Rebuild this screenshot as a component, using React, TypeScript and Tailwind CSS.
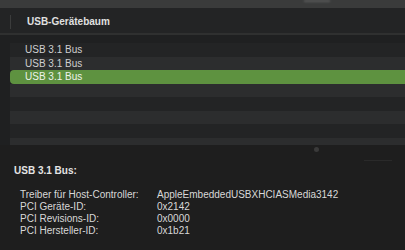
const rows = [
  { label: "USB 3.1 Bus", state: "dark" },
  { label: "USB 3.1 Bus", state: "light" },
  { label: "USB 3.1 Bus", state: "selected" },
  { label: "", state: "light" },
  { label: "", state: "dark" },
  { label: "", state: "light" },
  { label: "", state: "dark" },
];

const details = [
  ["Treiber für Host-Controller:", "AppleEmbeddedUSBXHCIASMedia3142"],
  ["PCI Geräte-ID:", "0x2142"],
  ["PCI Revisions-ID:", "0x0000"],
  ["PCI Hersteller-ID:", "0x1b21"],
];

export default function App() {
  return (
    <div className="w-[405px] h-[250px] overflow-hidden bg-[#1e1e1e] flex flex-col font-['Liberation_Sans',Arial,sans-serif] text-[10px] leading-none">
      {/* window top strip, the cut-off column title shows as a faint smudge */}
      <div className="h-[8px] shrink-0 bg-[#3a3b3b] relative overflow-hidden">
        <div className="absolute left-[304px] top-0 w-[26px] h-[2px] bg-[#5a5b5b] blur-[1px]" />
      </div>

      {/* column header */}
      <div className="h-[25px] shrink-0 bg-[#232425] flex items-center pt-[3px]">
        <div className="ml-[10px] w-px h-[14px] bg-[#3b3c3c]" />
        <span className="ml-[16px] font-bold text-[#e0e0e0]">USB-Gerätebaum</span>
      </div>
      <div className="h-[2px] shrink-0 bg-[#2f3030]" />

      {/* tree */}
      <div className="h-[110px] shrink-0 bg-[#1f2021] pl-[10px] pt-[8px] overflow-hidden">
        {rows.map((r, i) => (
          <div
            key={i}
            className={
              r.state === "selected"
                ? "h-[13.5px] flex items-center pl-[15px] pt-[1px] bg-[#5e9240] rounded-l-[4px] text-[#eef3ea]"
                : r.state === "light"
                ? "h-[13.5px] flex items-center pl-[15px] pt-[1px] bg-[#2c2d2e] text-[#cfcfcf]"
                : "h-[13.5px] flex items-center pl-[15px] pt-[1px] bg-[#232425] text-[#cfcfcf]"
            }
          >
            {r.label}
          </div>
        ))}
        <div className="h-[8px] bg-[#2c2d2e]" />
      </div>

      {/* details */}
      <div className="flex-1 relative px-[14px] pt-[21px]">
        <div className="absolute left-[314px] top-[2px] w-[5px] h-[5px] rounded-full bg-[#3a3a3a]" />
        <div className="absolute left-[364px] top-[15px] w-[28px] h-[1px] bg-[#2a2a2a]" />
        <div className="font-bold text-[#e4e4e4]">USB 3.1 Bus:</div>
        <div className="mt-[13px] pl-[6px] flex flex-col">
          {details.map(([k, v]) => (
            <div key={k} className="flex h-[12px] items-center text-[#d8d8d8]">
              <span className="w-[137px] shrink-0">{k}</span>
              <span>{v}</span>
            </div>
          ))}
        </div>
      </div>
    </div>
  );
}
